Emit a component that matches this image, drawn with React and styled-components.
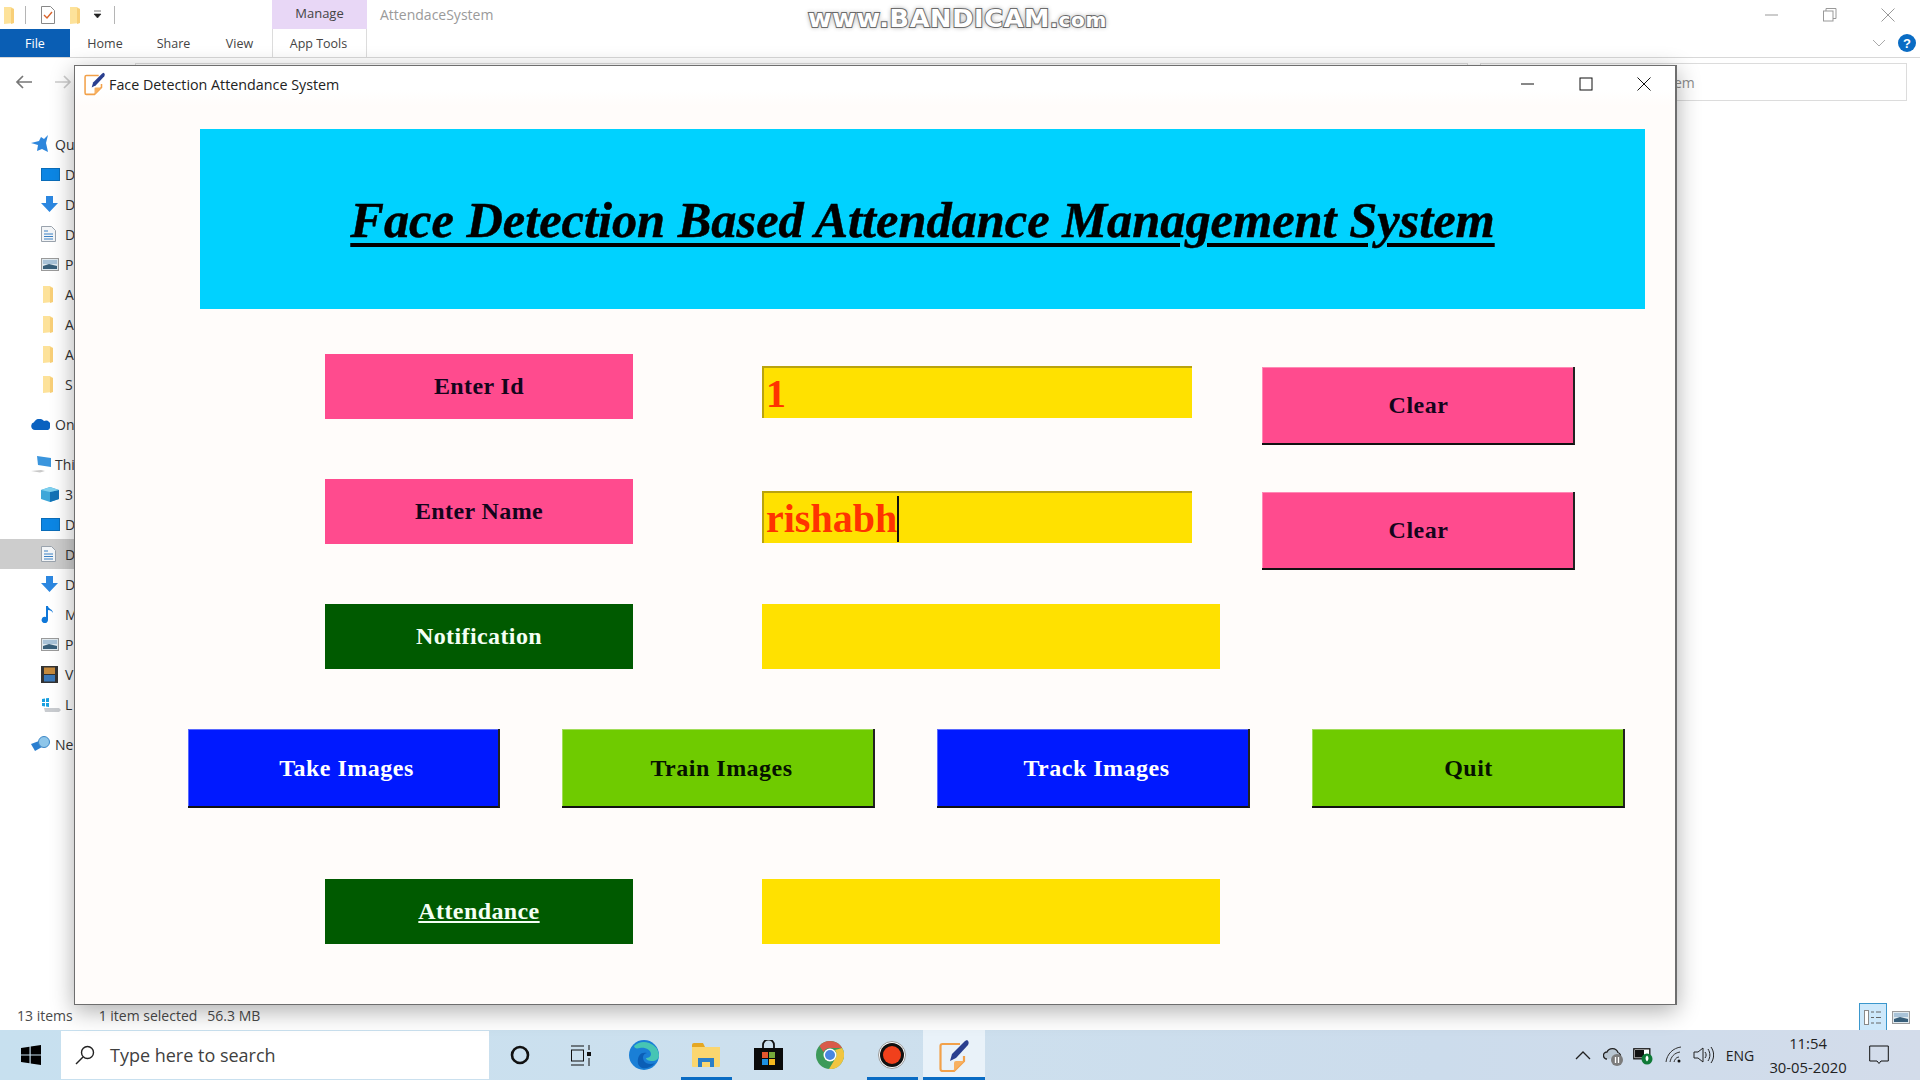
import React from "react";
import styled, { createGlobalStyle } from "styled-components";

const Global = createGlobalStyle`
  html, body { margin: 0; padding: 0; background: #fff; overflow: hidden; }
  * { box-sizing: border-box; }
  body { font-family: "Open Sans", "Noto Sans", sans-serif; }
`;

const Screen = styled.div`
  position: relative;
  width: 1920px;
  height: 1080px;
  display: flex;
  flex-direction: column;
  overflow: hidden;
  background: #fff;
`;

/* ---------- explorer behind the window ---------- */
const TitleRow = styled.div`
  height: 29px;
  display: flex;
  align-items: stretch;
`;
const QuickIcons = styled.div`
  width: 272px;
  display: flex;
  align-items: center;
  padding: 0 0 0 2px;
`;
const QuickIcon = styled.span`
  display: flex;
  margin-left: ${(p) => p.$gap || 0}px;
`;
const Divider = styled.span`
  width: 1px;
  height: 18px;
  background: #b5b5b5;
  margin-left: ${(p) => p.$gap || 0}px;
`;
const ManageTab = styled.div`
  width: 95px;
  background: #e8d7f6;
  color: #444;
  font-size: 13px;
  display: flex;
  align-items: center;
  justify-content: center;
  padding-bottom: 4px;
`;
const AppName = styled.div`
  flex: 1;
  color: #9a9a9a;
  font-size: 14px;
  padding: 0 0 0 13px;
  display: flex;
  align-items: center;
`;
const CaptionButtons = styled.div`
  display: flex;
  align-items: center;
  gap: ${(p) => p.$gap}px;
  padding-right: ${(p) => p.$right}px;
`;
const RibbonRow = styled.div`
  height: 29px;
  display: flex;
  align-items: stretch;
  border-bottom: 1px solid #d8d8d8;
`;
const FileTab = styled.div`
  width: 70px;
  background: #0a5eb4;
  color: #fff;
  font-size: 12.5px;
  display: flex;
  align-items: center;
  justify-content: center;
`;
const RibbonTab = styled.div`
  width: ${(p) => p.$w}px;
  color: #444;
  font-size: 12.5px;
  display: flex;
  align-items: center;
  justify-content: center;
`;
const ToolsTab = styled(RibbonTab)`
  border-left: 1px solid #dcdcdc;
  border-right: 1px solid #dcdcdc;
  padding-right: 2px;
`;
const RibbonSpacer = styled.div`
  flex: 1;
`;
const RibbonEnd = styled.div`
  display: flex;
  align-items: center;
  gap: 10px;
  padding-right: 4px;
`;
const HelpDot = styled.span`
  width: 18px;
  height: 18px;
  border-radius: 50%;
  background: #0a6cc4;
  color: #fff;
  font: bold 13px "Liberation Sans", sans-serif;
  display: flex;
  align-items: center;
  justify-content: center;
`;
const NavRow = styled.div`
  height: 44px;
  display: flex;
  align-items: flex-start;
  padding: 5px 13px 0 15px;
`;
const NavArrows = styled.div`
  width: 120px;
  height: 38px;
  display: flex;
  align-items: center;
  gap: 23px;
`;
const AddressBox = styled.div`
  width: 1333px;
  height: 38px;
  border: 1px solid #dcdcdc;
`;
const SearchBox = styled.div`
  width: 427px;
  height: 38px;
  margin-left: 12px;
  border: 1.5px solid #dcdcdc;
  color: #8c8c8c;
  font-size: 14px;
  display: flex;
  align-items: center;
  padding-left: 193px;
`;
const Body = styled.div`
  flex: 1;
  min-height: 0;
  padding-top: 27px;
`;
const NavGroup = styled.div`
  margin-bottom: ${(p) => p.$after || 0}px;
`;
const NavItem = styled.div`
  width: 74px;
  height: 30px;
  display: flex;
  align-items: center;
  padding-left: ${(p) => (p.$top ? 31 : 41)}px;
  background: ${(p) => (p.$active ? "#cdcdcd" : "transparent")};
  color: #333;
  font-size: 14px;
  white-space: nowrap;
`;
const NavIcon = styled.span`
  width: 24px;
  display: flex;
  flex: none;
`;
const StatusBar = styled.div`
  height: 25px;
  display: flex;
  align-items: center;
  padding-left: 17px;
  color: #4a4a4a;
  font-size: 14px;
`;
const StatusText = styled.span`
  margin-right: ${(p) => p.$after}px;
  padding-bottom: 4px;
`;
const ViewSwitch = styled.div`
  margin-left: auto;
  display: flex;
  align-items: center;
  padding-right: 10px;
  gap: 5px;
`;
const ViewButton = styled.span`
  height: 29px;
  display: flex;
  align-items: center;
  justify-content: center;
  background: ${(p) => (p.$on ? "#cde8fb" : "transparent")};
  border: ${(p) => (p.$on ? "1px solid #3a97cd" : "none")};
  width: ${(p) => (p.$on ? 28 : 18)}px;
`;

/* ---------- taskbar ---------- */
const Taskbar = styled.div`
  height: 50px;
  display: flex;
  align-items: stretch;
  background: linear-gradient(90deg, #c7e0ef 0%, #cde0ee 45%, #ccdcec 75%, #d3dcea 100%);
`;
const StartButton = styled.div`
  width: 61px;
  display: flex;
  align-items: center;
  justify-content: center;
`;
const TaskSearch = styled.div`
  width: 428px;
  margin: 1px 0 1px;
  background: #fff;
  display: flex;
  align-items: center;
  padding-left: 14px;
  gap: 15px;
  color: #3f3f3f;
  font-size: 18px;
`;
const TaskItem = styled.div`
  position: relative;
  width: 62px;
  display: flex;
  align-items: center;
  justify-content: center;
  padding-right: ${(p) => p.$nudge || 0}px;
  background: ${(p) => (p.$active ? "#e9f2f9" : "transparent")};
  &::after {
    content: "";
    position: absolute;
    bottom: 0;
    height: 3px;
    left: ${(p) => (p.$active ? 0 : 6)}px;
    right: ${(p) => (p.$active ? 0 : 5)}px;
    background: ${(p) => (p.$open ? "#0a6cc4" : "transparent")};
  }
`;
const Tray = styled.div`
  margin-left: auto;
  display: flex;
  align-items: center;
  color: #222;
`;
const TraySlot = styled.div`
  width: ${(p) => p.$w}px;
  display: flex;
  justify-content: center;
  align-items: center;
  font-size: 14px;
`;
const Clock = styled.div`
  width: 90px;
  font-size: 14.8px;
  line-height: 24px;
  text-align: center;
  margin-right: 16px;
  white-space: nowrap;
`;

/* ---------- app window ---------- */
const AppWindow = styled.div`
  position: absolute;
  left: 74px;
  top: 65px;
  width: 1603px;
  height: 940px;
  display: flex;
  flex-direction: column;
  background: #fffcfa;
  border: 1px solid #6e6e6e;
  border-right-width: 2px;
  box-shadow: 0 6px 22px rgba(0, 0, 0, 0.32);
`;
const WindowBar = styled.div`
  height: 40px;
  flex: none;
  display: flex;
  align-items: center;
  padding: 0 0 4px 9px;
  gap: 4px;
  background: linear-gradient(#fff 60%, #fffcfa);
  color: #222;
  font-size: 14.3px;
`;
const WindowTitle = styled.span`
  flex: 1;
`;
const Banner = styled.header`
  margin: 23px 0 45px 125px;
  width: 1445px;
  height: 180px;
  flex: none;
  padding-top: 2px;
  background: #00d2ff;
  display: flex;
  align-items: center;
  justify-content: center;
`;
const Heading = styled.h1`
  margin: 0;
  font: italic bold 50.4px "Liberation Serif", serif;
  -webkit-text-stroke: 0.5px #000;
  text-decoration: underline;
  text-decoration-thickness: 4px;
  text-underline-offset: 6px;
  color: #000;
`;
const FormRow = styled.div`
  height: ${(p) => p.$h}px;
  flex: none;
  display: flex;
  align-items: flex-start;
  padding-left: ${(p) => p.$left}px;
`;
const tones = {
  pink: ["#ff4b8e", "#14051c"],
  green: ["#005a00", "#f4fff4"],
  blue: ["#0019ff", "#fff"],
  lime: ["#6fcb00", "#061200"],
};
const Label = styled.div`
  width: 308px;
  height: 65px;
  flex: none;
  background: ${(p) => tones[p.$tone][0]};
  color: ${(p) => tones[p.$tone][1]};
  font: bold 24px "Liberation Serif", serif;
  letter-spacing: 0.4px;
  text-decoration: ${(p) => (p.$link ? "underline" : "none")};
  display: flex;
  align-items: center;
  justify-content: center;
`;
const Entry = styled.div`
  width: 430px;
  height: 52px;
  flex: none;
  margin: 12px 70px 0 129px;
  background: #ffe100;
  border-top: 2px solid #b9a30e;
  border-left: 2px solid #b9a30e;
  color: #ff3300;
  font: bold 40px/48px "Liberation Serif", serif;
  padding: 1px 0 0 2px;
  display: flex;
  align-items: center;
`;
const Caret = styled.span`
  width: 2px;
  height: 46px;
  background: #111;
`;
const Output = styled.div`
  width: 458px;
  height: 65px;
  flex: none;
  margin-left: 129px;
  background: #ffe100;
`;
const Button = styled.button`
  width: ${(p) => p.$w || 313}px;
  height: ${(p) => p.$h || 78}px;
  flex: none;
  margin: ${(p) => p.$m || 0};
  padding: ${(p) => (p.$h ? 2 : 0)}px 0 0 ${(p) => p.$nudge || 0}px;
  background: ${(p) => tones[p.$tone][0]};
  color: ${(p) => tones[p.$tone][1]};
  font: bold 24px "Liberation Serif", serif;
  letter-spacing: 0.5px;
  border: none;
  border-right: 2px solid #222;
  border-bottom: 2px solid #111;
  box-shadow: inset 1px 1px 0 rgba(255, 255, 255, 0.35);
`;
const Watermark = styled.div`
  position: absolute;
  left: 805px;
  top: 3px;
  width: 305px;
  height: 32px;
  display: flex;
  align-items: baseline;
  justify-content: center;
  font: bold 25.5px "DejaVu Sans", sans-serif;
  color: #fff;
  -webkit-text-stroke: 2px #5f5f5f;
  paint-order: stroke fill;
  text-shadow: 0 0 5px #8a8a8a;
  white-space: nowrap;
  letter-spacing: 0.7px;
`;
const WatermarkSmall = styled.span`
  font-size: 20px;
`;

/* ---------- icons ---------- */
const Svg = ({ s = 20, w, h, children }) => (
  <svg width={w || s} height={h || s} viewBox={`0 0 ${w || s} ${h || s}`} fill="none">{children}</svg>
);
const Folder = () => (
  <Svg w={14} h={20}>
    <path d="M2 2h7l3 2v14l-10 1z" fill="#fde29a" />
    <path d="M9 3l3 1v14l-3 1z" fill="#f8cf78" />
  </Svg>
);
const Checked = () => (
  <Svg w={16} h={20}>
    <path d="M1.5 1.5h9l4 4v13h-13z" fill="#fff" stroke="#888" />
    <path d="M4 10l3 3 5-6" stroke="#d9632b" strokeWidth="1.4" />
  </Svg>
);
const Minimize = ({ c }) => <Svg s={14}><path d="M0 7h13" stroke={c} /></Svg>;
const Restore = () => (
  <Svg s={14}>
    <rect x="0.5" y="3" width="9.5" height="10" stroke="#999" />
    <path d="M3 3V.5h10v10h-3" stroke="#999" />
  </Svg>
);
const Maximize = () => <Svg s={14}><rect x="1" y="1" width="12" height="12" stroke="#111" fill="none" /></Svg>;
const Close = ({ c }) => <Svg s={14}><path d="M0.5 .5l13 13M13.5 .5l-13 13" stroke={c} /></Svg>;
const Chevron = ({ c, up }) => (
  <Svg w={16} h={10}><path d={up ? "M1 9l7-7 7 7" : "M1 2l6 6 6-6"} stroke={c} strokeWidth={up ? 1.3 : 1} /></Svg>
);
const Arrow = ({ c, flip }) => (
  <Svg w={17} h={14}>
    <path d={flip ? "M0 7h15M9 1l6 6-6 6" : "M17 7H2M8 1L2 7l6 6"} stroke={c} strokeWidth="1.7" />
  </Svg>
);
const NoteLogo = ({ s }) => (
  <svg width={s} height={s * 1.1} viewBox="0 0 30 33" fill="none">
    <path d="M21 5H3.5A2 2 0 0 0 1.5 7v23a2 2 0 0 0 2 2H15l10-10v-5" stroke="#f2a14a" strokeWidth="2.2" />
    <path d="M15 32v-8a2 2 0 0 1 2-2h8z" fill="#f7b162" />
    <path d="M28 1c2 1 2 3 1 5L17 19l-6 3 2-7L26 2z" fill="#2a3f8f" />
  </svg>
);
const Star = () => (
  <Svg w={18} h={18}><path d="M17 0l-2 8 2 9-6-3-5 2 1-6-7-2 8-2 2-4 3 2z" fill="#2d86dc" /></Svg>
);
const Monitor = () => <Svg w={19} h={13}><rect width="18" height="12" x=".5" y="0.5" fill="#0c86e4" stroke="#0a6cb8" /></Svg>;
const Down = () => <Svg w={17} h={16}><path d="M5 0h7v7h5l-8.500 9L0 7h5z" fill="#2c87e0" /></Svg>;
const Doc = () => (
  <Svg w={15} h={16}>
    <path d="M.5.5h10l4 4v11H.5z" fill="#f3f5f7" stroke="#9aa3ad" />
    <path d="M3 5h4M3 8h9M3 10.500h9M3 13h9" stroke="#3a80c4" />
  </Svg>
);
const Pic = () => (
  <Svg w={18} h={13}>
    <rect x=".5" y=".5" width="17" height="12" fill="#dfe9ef" stroke="#9a9a9a" />
    <rect x="2" y="2" width="14" height="4" fill="#a9c3d8" />
    <path d="M2 8l6-2 8 2v3H2z" fill="#385f7a" />
  </Svg>
);
const Cloud = () => (
  <Svg w={19} h={11}><path d="M4 11a4 4 0 0 1-1-7.800A6 6 0 0 1 13 2a4.500 4.500 0 0 1 6 6 3 3 0 0 1-2 3z" fill="#0a62c0" /></Svg>
);
const Pc = () => (
  <Svg w={21} h={17}>
    <path d="M6 0l14 2v9L7 9z" fill="#3a95dd" />
    <path d="M0 15l10-1 4 1-5 1.500z" fill="#c9c9c9" />
  </Svg>
);
const Cube = () => (
  <Svg w={18} h={15}>
    <path d="M9 0l9 3v9l-9 3-9-3V3z" fill="#3fa7d9" />
    <path d="M9 5l9-2v9l-9 3z" fill="#1272b6" />
    <path d="M9 0l9 3-9 2-9-2z" fill="#7fd0ee" />
  </Svg>
);
const Note = () => (
  <Svg w={12} h={17}><path d="M5 0h2c0 3 5 3 5 7-1-2-3-3-5-3v10a3.200 3.200 0 1 1-2-3z" fill="#0f77d8" /></Svg>
);
const Film = () => (
  <Svg w={17} h={17}>
    <rect width="17" height="17" fill="#333" />
    <rect x="3" y="1.500" width="11" height="6.500" fill="#c68a3c" />
    <rect x="3" y="9" width="11" height="6.500" fill="#3b78b8" />
  </Svg>
);
const LocalDisk = () => (
  <Svg w={20} h={15}>
    <path d="M1 2l3-.5V5H1zM5 1.300 8 1v4H5zM1 6h3v3.500L1 9zM5 6h3v4L5 9.500z" fill="#19a0e0" />
    <path d="M3 11h15l2 2-2 2H4z" fill="#c9ccd0" />
  </Svg>
);
const Net = () => (
  <Svg w={20} h={16}>
    <path d="M0 8l8-3 3 6-7 4z" fill="#2b7fd0" />
    <circle cx="13" cy="6" r="5.500" fill="#8ec6ea" stroke="#3c87c6" />
  </Svg>
);
const WinLogo = () => (
  <Svg s={20}><path d="M0 3l8.500-1.300V9.500H0zM9.700 1.500 20 0v9.500H9.700zM0 10.500h8.500v7.800L0 17zM9.700 10.500H20V20L9.700 18.500z" fill="#000" /></Svg>
);
const Lens = () => (
  <Svg s={20}>
    <circle cx="12.500" cy="7.500" r="6" stroke="#222" strokeWidth="1.400" />
    <path d="M8 12l-7 7" stroke="#222" strokeWidth="1.500" />
  </Svg>
);
const Ring = () => <Svg s={20}><circle cx="10" cy="10" r="8" stroke="#111" strokeWidth="2.600" /></Svg>;
const TaskView = () => (
  <Svg w={21} h={21}>
    <path d="M1 1h13M1 20h13M1 18h0" stroke="#111" />
    <rect x="1.500" y="5" width="12" height="11" stroke="#111" />
    <path d="M19 0v5M19 13v8" stroke="#111" />
    <rect x="17" y="7" width="4" height="4" fill="#111" />
  </Svg>
);
const Edge = () => (
  <Svg s={30}>
    <circle cx="15" cy="15" r="15" fill="#1a7fd6" />
    <path d="M5 6a15 15 0 0 1 25 9c0 4-3 6-7 6-3 0-6-1-6-3 2 0 5-1 5-4 0-4-6-7-11-6-3 .5-5 1-6-2z" fill="#46c5b4" />
    <path d="M10 16c1-3 5-4 8-3-4 1-5 4-3 8 2 3 7 4 11 2-3 4-9 6-13 5-5-2-5-8-3-12z" fill="#0b5eb6" />
  </Svg>
);
const BigFolder = () => (
  <Svg w={28} h={25}>
    <path d="M0 2a2 2 0 0 1 2-2h9l2 4h-13z" fill="#e5a722" />
    <path d="M0 4h28v19a1 1 0 0 1-1 1H1a1 1 0 0 1-1-1z" fill="#fbd66f" />
    <path d="M6 24v-9h16v9h-4v-5h-8v5z" fill="#2c7fc8" />
  </Svg>
);
const Store = () => (
  <Svg w={29} h={30}>
    <path d="M9 9V5a5.500 5.500 0 0 1 11 0v4" stroke="#111" strokeWidth="1.800" />
    <rect y="8" width="29" height="22" fill="#0b0b0b" />
    <rect x="8" y="12" width="6" height="6" fill="#e4572e" />
    <rect x="15" y="12" width="6" height="6" fill="#76a93a" />
    <rect x="8" y="19" width="6" height="6" fill="#1e90e0" />
    <rect x="15" y="19" width="6" height="6" fill="#f5b81f" />
  </Svg>
);
const Chrome = () => (
  <Svg s={28}>
    <circle cx="14" cy="14" r="14" fill="#3d9a5a" />
    <path d="M14 0a14 14 0 0 1 12.100 7H14a7 7 0 0 0-6.500 4L3.500 5A14 14 0 0 1 14 0z" fill="#d95a4a" />
    <path d="M26.100 7A14 14 0 0 1 13 28l6-10a7 7 0 0 0 0-9z" fill="#f1c540" />
    <circle cx="14" cy="14" r="6.500" fill="#fff" />
    <circle cx="14" cy="14" r="5" fill="#4a86e0" />
  </Svg>
);
const Rec = () => (
  <Svg s={28}>
    <circle cx="14" cy="14" r="13.500" fill="#fff" stroke="#999" />
    <circle cx="14" cy="14" r="12" fill="#111" />
    <circle cx="14" cy="14" r="9" fill="#f0401c" />
  </Svg>
);
const TrayCloud = () => (
  <Svg w={20} h={21}>
    <path d="M4 14a3.500 3.500 0 0 1 0-7 6 6 0 0 1 11 .500 3.500 3.500 0 0 1 2 5" stroke="#222" strokeWidth="1.300" fill="#b9c6d2" />
    <circle cx="14" cy="15" r="6" fill="#7c7c7c" />
    <path d="M12.500 12v6M15.500 12v6" stroke="#fff" strokeWidth="1.300" />
  </Svg>
);
const Battery = () => (
  <Svg w={20} h={20}>
    <rect x=".8" y="3.800" width="16" height="10" stroke="#111" fill="#fff" strokeWidth="1.300" />
    <rect x="2" y="5" width="9" height="7.500" fill="#111" />
    <circle cx="14" cy="14" r="5.500" fill="#0f7a37" />
    <path d="M14 10.500c2 1.500 2 4 0 6-2-2-2-4.500 0-6z" fill="#fff" />
  </Svg>
);
const Wifi = () => (
  <Svg w={18} h={18}>
    <path d="M1 16C2 8 8 2 16 1M5 16c1-5 4-9 10-10M9 16c.5-2 2-5 5-5" stroke="#333" strokeWidth="1" />
    <circle cx="14" cy="15" r="1.500" fill="#111" />
  </Svg>
);
const Speaker = () => (
  <Svg w={21} h={18}>
    <path d="M1 6h4l5-4v14l-5-4H1z" stroke="#222" />
    <path d="M12 6c1.500 2 1.500 4 0 6M15 3c2.500 4 2.500 8 0 12M18 1c3.500 5 3.500 11 0 16" stroke="#222" />
  </Svg>
);
const Notice = () => (
  <Svg w={20} h={20}><path d="M.7 1h18.600v15H12l-2 2.500L8 16H.7z" stroke="#111" /></Svg>
);
const DetailsIcon = () => (
  <Svg w={18} h={15}>
    <rect x=".5" y=".5" width="4" height="14" fill="#fff" stroke="#8a8a8a" />
    <path d="M7 2h3M12 2h5M7 7.500h3M12 7.500h5M7 13h3M12 13h5" stroke="#666" />
  </Svg>
);

const quick = [
  [<Star />, "Qu", true], [<Monitor />, "D"], [<Down />, "D"], [<Doc />, "D"], [<Pic />, "P"],
  [<Folder />, "A"], [<Folder />, "A"], [<Folder />, "A"], [<Folder />, "S"],
];
const pc = [
  [<Pc />, "Thi", true], [<Cube />, "3"], [<Monitor />, "D"], [<Doc />, "D", false, true], [<Down />, "D"],
  [<Note />, "M"], [<Pic />, "P"], [<Film />, "V"], [<LocalDisk />, "L"],
];
const renderNav = (list) =>
  list.map(([icon, text, top, active], i) => (
    <NavItem key={i} $top={top} $active={active}>
      <NavIcon>{icon}</NavIcon>
      {text}
    </NavItem>
  ));

export default function App() {
  return (
    <Screen>
      <Global />
      <TitleRow>
        <QuickIcons>
          <QuickIcon><Folder /></QuickIcon>
          <Divider $gap={9} />
          <QuickIcon $gap={14}><Checked /></QuickIcon>
          <QuickIcon $gap={12}><Folder /></QuickIcon>
          <QuickIcon $gap={11}>
            <Svg w={9} h={9}><path d="M1 1h7M1 4h7l-3.500 4z" fill="#222" stroke="#222" strokeWidth=".6" /></Svg>
          </QuickIcon>
          <Divider $gap={12} />
        </QuickIcons>
        <ManageTab>Manage</ManageTab>
        <AppName>AttendaceSystem</AppName>
        <CaptionButtons $gap={44} $right={25}>
          <Minimize c="#999" />
          <Restore />
          <Close c="#999" />
        </CaptionButtons>
      </TitleRow>
      <RibbonRow>
        <FileTab>File</FileTab>
        <RibbonTab $w={70}>Home</RibbonTab>
        <RibbonTab $w={67}>Share</RibbonTab>
        <RibbonTab $w={65}>View</RibbonTab>
        <ToolsTab $w={95}>App Tools</ToolsTab>
        <RibbonSpacer />
        <RibbonEnd>
          <Chevron c="#aaa" />
          <HelpDot>?</HelpDot>
        </RibbonEnd>
      </RibbonRow>
      <NavRow>
        <NavArrows>
          <Arrow c="#777" />
          <Arrow c="#ccc" flip />
        </NavArrows>
        <AddressBox />
        <SearchBox>em</SearchBox>
      </NavRow>
      <Body>
        <NavGroup $after={10}>{renderNav(quick)}</NavGroup>
        <NavGroup $after={10}>{renderNav([[<Cloud />, "On", true]])}</NavGroup>
        <NavGroup $after={10}>{renderNav(pc)}</NavGroup>
        <NavGroup>{renderNav([[<Net />, "Ne", true]])}</NavGroup>
      </Body>
      <StatusBar>
        <StatusText $after={26}>13 items</StatusText>
        <StatusText $after={10}>1 item selected</StatusText>
        <StatusText $after={0}>56.3 MB</StatusText>
        <ViewSwitch>
          <ViewButton $on><DetailsIcon /></ViewButton>
          <ViewButton><Pic /></ViewButton>
        </ViewSwitch>
      </StatusBar>
      <Taskbar>
        <StartButton><WinLogo /></StartButton>
        <TaskSearch>
          <Lens />
          Type here to search
        </TaskSearch>
        <TaskItem><Ring /></TaskItem>
        <TaskItem $nudge={4}><TaskView /></TaskItem>
        <TaskItem><Edge /></TaskItem>
        <TaskItem $open><BigFolder /></TaskItem>
        <TaskItem><Store /></TaskItem>
        <TaskItem><Chrome /></TaskItem>
        <TaskItem $open><Rec /></TaskItem>
        <TaskItem $open $active><NoteLogo s={30} /></TaskItem>
        <Tray>
          <TraySlot $w={30}><Chevron c="#222" up /></TraySlot>
          <TraySlot $w={30}><TrayCloud /></TraySlot>
          <TraySlot $w={30}><Battery /></TraySlot>
          <TraySlot $w={31}><Wifi /></TraySlot>
          <TraySlot $w={28}><Speaker /></TraySlot>
          <TraySlot $w={46}>ENG</TraySlot>
          <Clock>11:54<br />30-05-2020</Clock>
          <TraySlot $w={20}><Notice /></TraySlot>
          <TraySlot $w={31} />
        </Tray>
      </Taskbar>

      <AppWindow>
        <WindowBar>
          <NoteLogo s={21} />
          <WindowTitle>Face Detection Attendance System</WindowTitle>
          <CaptionButtons $gap={44} $right={24}>
            <Minimize c="#111" />
            <Maximize />
            <Close c="#111" />
          </CaptionButtons>
        </WindowBar>
        <Banner>
          <Heading>Face Detection Based Attendance Management System</Heading>
        </Banner>
        <FormRow $h={125} $left={250}>
          <Label $tone="pink">Enter Id</Label>
          <Entry>1</Entry>
          <Button $tone="pink" $nudge={2} $m="13px 0 0">Clear</Button>
        </FormRow>
        <FormRow $h={125} $left={250}>
          <Label $tone="pink">Enter Name</Label>
          <Entry>rishabh<Caret /></Entry>
          <Button $tone="pink" $nudge={2} $m="13px 0 0">Clear</Button>
        </FormRow>
        <FormRow $h={125} $left={250}>
          <Label $tone="green">Notification</Label>
          <Output />
        </FormRow>
        <FormRow $h={150} $left={113}>
          <Button $tone="blue" $w={312} $h={79} $nudge={7}>Take Images</Button>
          <Button $tone="lime" $h={79} $nudge={8} $m="0 0 0 62px">Train Images</Button>
          <Button $tone="blue" $h={79} $nudge={8} $m="0 0 0 62px">Track Images</Button>
          <Button $tone="lime" $h={79} $nudge={2} $m="0 0 0 62px">Quit</Button>
        </FormRow>
        <FormRow $h={65} $left={250}>
          <Label $tone="green" $link>Attendance</Label>
          <Output />
        </FormRow>
      </AppWindow>

      <Watermark>www.BANDICAM<WatermarkSmall>.com</WatermarkSmall></Watermark>
    </Screen>
  );
}
